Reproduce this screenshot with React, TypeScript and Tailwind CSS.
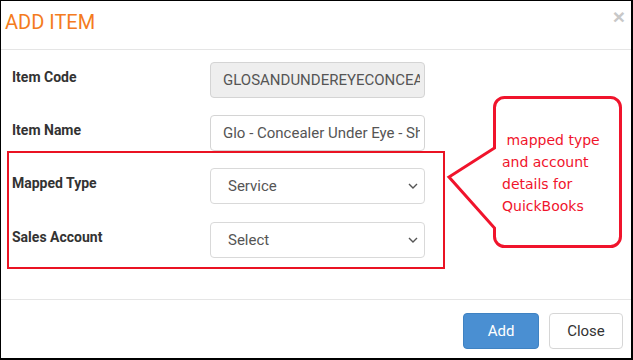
import { ReactNode } from 'react'

function Chevron() {
  return (
    <svg width="10" height="6" viewBox="0 0 10 6" className="text-[#555]">
      <polyline points="1,1 5,5 9,1" fill="none" stroke="currentColor" strokeWidth="1.4" />
    </svg>
  )
}

function Row({ label, children }: { label: string; children: ReactNode }) {
  return (
    <div className="flex h-[36px]">
      <div className="w-[209px] pl-[11px] pt-[5px] text-[14px] leading-[20px] font-bold text-[#333]">{label}</div>
      {children}
    </div>
  )
}

function TextBox({ value, disabled }: { value: string; disabled?: boolean }) {
  return (
    <input
      readOnly
      value={value}
      className={`w-[215px] h-[36px] rounded-[4px] border border-[#d4d4d4] pl-[12px] pr-[4px] text-[15px] text-[#555] outline-none ${
        disabled ? 'bg-[#eeeeee]' : 'bg-white'
      }`}
    />
  )
}

function SelectBox({ value }: { value: string }) {
  return (
    <div className="w-[215px] h-[36px] rounded-[4px] border border-[#d9d9d9] bg-white pl-[17px] pr-[6px] flex items-center justify-between text-[15px] text-[#555]">
      <span>{value}</span>
      <Chevron />
    </div>
  )
}

export default function App() {
  return (
    <div
      className="relative w-[633px] h-[360px] bg-white border-l border-t border-r-2 border-b-2 border-black flex flex-col"
      style={{ fontFamily: 'Roboto, "Liberation Sans", sans-serif' }}
    >
      <div className="h-[49px] shrink-0 border-b border-[#e5e5e5] flex justify-between pl-[4px] pr-[6px] pt-[9px]">
        <h4 className="text-[20px] leading-[24px] text-[#f47b20]">ADD ITEM</h4>
        <span className="text-[21px] leading-[14px] font-bold text-[#c8c8c8]" style={{ fontFamily: '"Liberation Sans", sans-serif' }}>
          ×
        </span>
      </div>

      <div className="h-[249px] shrink-0 pt-[12px] flex flex-col gap-[17px]">
        <Row label="Item Code">
          <TextBox value="GLOSANDUNDEREYECONCEALER" disabled />
        </Row>
        <Row label="Item Name">
          <TextBox value="Glo - Concealer Under Eye - Shade" />
        </Row>
        <Row label="Mapped Type">
          <SelectBox value="Service" />
        </Row>
        <div className="mt-px">
          <Row label="Sales Account">
            <SelectBox value="Select" />
          </Row>
        </div>
      </div>

      <div className="flex-1 border-t border-[#e5e5e5] pt-[13px] pr-[8px] flex justify-end gap-[10px]">
        <button className="w-[76px] h-[36px] rounded-[4px] bg-[#4a8fd2] border border-[#3f82c2] text-white text-[15px]">
          Add
        </button>
        <button className="w-[74px] h-[36px] rounded-[4px] bg-white border border-[#d6d6d6] text-[#333] text-[15px]">
          Close
        </button>
      </div>

      {/* annotation: red frame round the mapped fields */}
      <div className="absolute left-[6px] top-[150px] w-[438px] h-[118px] border-2 border-[#ea1323]" />

      {/* annotation: speech callout */}
      <svg className="absolute -left-px -top-px pointer-events-none" width="633" height="360" viewBox="0 0 633 360">
        <path
          d="M504.5 97.5 H610.5 A10 10 0 0 1 620.5 107.5 V236.5 A10 10 0 0 1 610.5 246.5 H504.5 A10 10 0 0 1 494.5 236.5 V228 L449 177 L494.5 148 V107.5 A10 10 0 0 1 504.5 97.5 Z"
          fill="white"
          stroke="#f0142c"
          strokeWidth="3"
          strokeLinejoin="miter"
        />
      </svg>
      <div
        className="absolute left-[501px] top-[128px] text-[14px] leading-[22px] text-[#f0142c] whitespace-pre"
        style={{ fontFamily: '"DejaVu Sans", sans-serif' }}
      >
        {' mapped type\nand account\ndetails for\nQuickBooks'}
      </div>
    </div>
  )
}
